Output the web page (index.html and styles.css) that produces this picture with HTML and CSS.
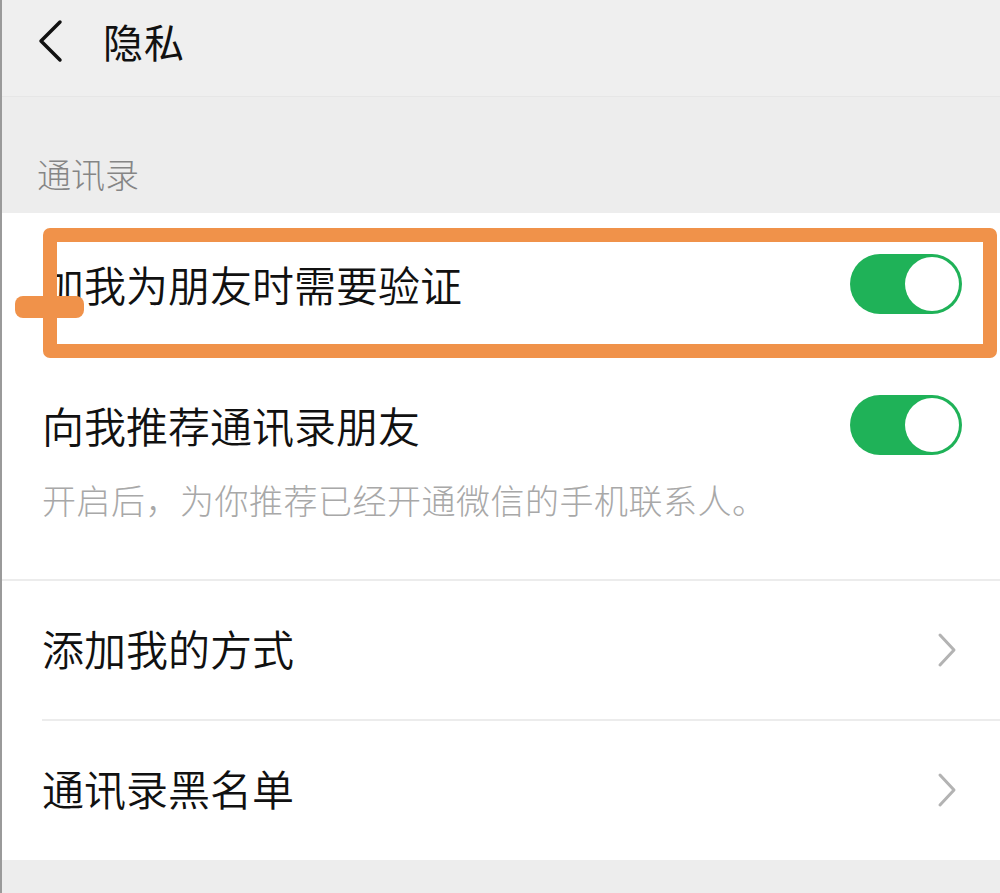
FILE: index.html
```html
<!DOCTYPE html>
<html lang="zh-CN">
<head>
<meta charset="utf-8">
<title>隐私</title>
<link rel="stylesheet" href="styles.css">
</head>
<body>
<div class="page">
  <header class="header">
    <svg class="back" width="30" height="44" viewBox="0 0 30 44"><polyline points="24,3 5,22 24,41" fill="none" stroke="#111" stroke-width="3.5" stroke-linecap="round" stroke-linejoin="round"/></svg>
    <h1 class="title">隐私</h1>
  </header>
  <div class="section-label">通讯录</div>
  <div class="list">
    <div class="row row-first">
      <span class="row-text">加我为朋友时需要验证</span>
      <span class="toggle"><span class="knob"></span></span>
      <div class="mark"></div>
      <div class="mark-tab"></div>
    </div>
    <div class="row-block">
      <div class="row-line">
        <span class="row-text">向我推荐通讯录朋友</span>
        <span class="toggle"><span class="knob"></span></span>
      </div>
      <div class="row-sub">开启后，为你推荐已经开通微信的手机联系人。</div>
    </div>
    <div class="row row-link">
      <span class="row-text">添加我的方式</span>
      <svg class="chev" width="22" height="36" viewBox="0 0 22 36"><polyline points="4,3 18,18 4,33" fill="none" stroke="#b3b3b3" stroke-width="3" stroke-linecap="round" stroke-linejoin="round"/></svg>
    </div>
    <div class="row row-link row-last">
      <span class="row-text">通讯录黑名单</span>
      <svg class="chev" width="22" height="36" viewBox="0 0 22 36"><polyline points="4,3 18,18 4,33" fill="none" stroke="#b3b3b3" stroke-width="3" stroke-linecap="round" stroke-linejoin="round"/></svg>
    </div>
  </div>
</div>
</body>
</html>
```
FILE: styles.css
```css
* { box-sizing: border-box; margin: 0; padding: 0; }
html, body { width: 1000px; height: 893px; overflow: hidden; }
body {
  background: #ededed;
  font-family: "Noto Sans CJK SC", "Noto Sans", sans-serif;
  color: #111;
}
.page {
  height: 893px;
  border-left: 2px solid #9a9a9a;
  background: #ededed;
}
.header {
  height: 97px;
  background: #efefef;
  border-bottom: 1px solid #e6e6e6;
  display: flex;
  align-items: center;
  padding-left: 34px;
}
.back { margin-top: -14px; }
.title {
  font-size: 40px;
  font-weight: 400;
  margin-left: 37px;
  margin-top: -14px;
  letter-spacing: 1px;
}
.section-label {
  height: 116px;
  padding-left: 35px;
  padding-top: 52px;
  font-size: 34px;
  font-weight: 300;
  line-height: 50px;
  color: #858585;
}
.list {
  background: #fff;
  height: 647px;
}
.row {
  position: relative;
  display: flex;
  align-items: center;
  justify-content: space-between;
  padding-left: 40px;
  padding-right: 38px;
}
.row-text {
  font-size: 42px;
  font-weight: 350;
  line-height: 50px;
  color: #111;
}
.row-first { height: 142px; }
.row-block {
  height: 226px;
  padding-left: 40px;
  padding-top: 45px;
  border-bottom: 2px solid #ececec;
}
.row-line {
  display: flex;
  align-items: center;
  justify-content: space-between;
  height: 50px;
  padding-right: 38px;
}
.row-sub {
  margin-top: 25px;
  font-size: 34px;
  font-weight: 300;
  line-height: 50px;
  color: #a8a8a8;
  letter-spacing: 0.5px;
}
.row-link {
  margin-left: 40px;
  padding-left: 0;
  padding-right: 42px;
  height: 140px;
  border-bottom: 2px solid #ececec;
}
.row-link .row-text { margin-top: -4px; }
.row-last { border-bottom: none; height: 137px; }
.toggle {
  width: 112px;
  height: 60px;
  border-radius: 30px;
  background: #1fb258;
  position: relative;
  flex: none;
}
.knob {
  position: absolute;
  right: 3px;
  top: 3px;
  width: 54px;
  height: 54px;
  border-radius: 50%;
  background: #fff;
}
.mark {
  position: absolute;
  left: 41px;
  top: 15px;
  width: 954px;
  height: 130px;
  border: 14px solid #f0924a;
  border-radius: 7px;
}
.mark-tab {
  position: absolute;
  left: 13px;
  top: 83px;
  width: 69px;
  height: 22px;
  background: #f0924a;
  border-radius: 8px;
}
```
